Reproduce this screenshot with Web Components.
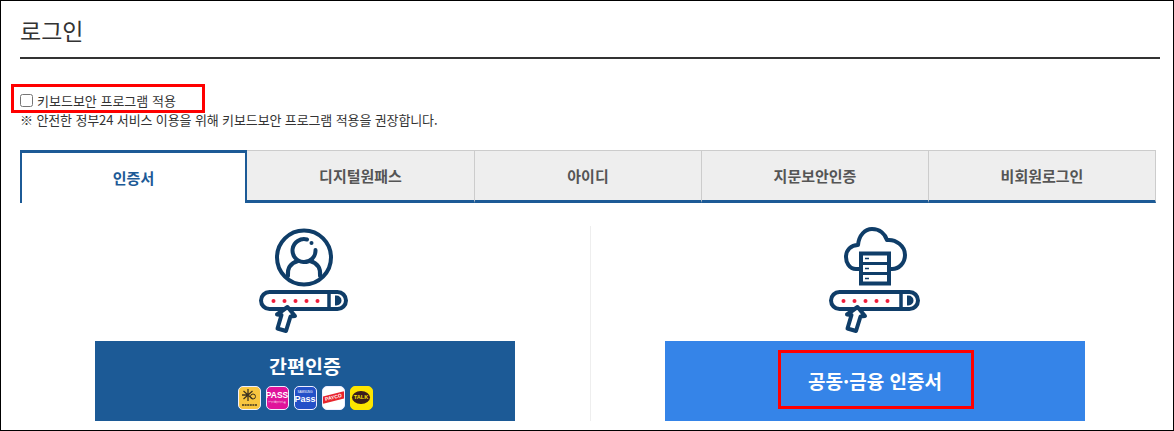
<!DOCTYPE html>
<html lang="ko">
<head>
<meta charset="utf-8">
<title>로그인</title>
<style>
  html, body { margin: 0; background: #fff; }
  body { font-family: "Noto Sans CJK KR", "Noto Sans", sans-serif; color: #333; }
</style>
</head>
<body>
<login-page>
  <key-option>키보드보안 프로그램 적용</key-option>
  <tab-bar slot="tabs">
    <tab-item active>인증서</tab-item>
    <tab-item>디지털원패스</tab-item>
    <tab-item>아이디</tab-item>
    <tab-item>지문보안인증</tab-item>
    <tab-item>비회원로그인</tab-item>
  </tab-bar>
  <auth-card slot="left" icon="user" color="#1c5a96" style="--label-size: 19.5px">
    간편인증
    <app-badges slot="extra"></app-badges>
  </auth-card>
  <auth-card slot="right" icon="cloud" color="#3584e8" marked>공동·금융 인증서</auth-card>
</login-page>

<script>
class LoginPage extends HTMLElement {
    constructor() {
        super();
        this.attachShadow({ mode: 'open' });
        this.shadowRoot.innerHTML = `
            <style>
                :host {
                    display: block;
                    box-sizing: border-box;
                    width: 1174px;
                    height: 431px;
                    border: 1px solid #000;
                    padding: 0 13px 0 19px;
                    overflow: hidden;
                }
                h1 {
                    margin: 0 0 25px;
                    height: 58px;
                    box-sizing: border-box;
                    border-bottom: 2px solid #333;
                    font-size: 23px;
                    font-weight: 400;
                    line-height: 58px;
                    color: #333;
                }
                .notice {
                    font-size: 13px;
                    letter-spacing: -0.12px;
                    line-height: 16px;
                    height: 16px;
                    color: #333;
                    margin-bottom: 22px;
                    white-space: nowrap;
                }
                .cols {
                    display: grid;
                    grid-template-columns: 570px 1px 568px;
                }
                .divider { background: #eeeeee; margin: 23px 0 0; height: 195px; }
            </style>
            <h1>로그인</h1>
            <slot></slot>
            <div class="notice">※ 안전한 정부24 서비스 이용을 위해 키보드보안 프로그램 적용을 권장합니다.</div>
            <slot name="tabs"></slot>
            <div class="cols">
                <slot name="left"></slot>
                <div class="divider"></div>
                <slot name="right"></slot>
            </div>
        `;
    }
}
customElements.define('login-page', LoginPage);

class KeyOption extends HTMLElement {
    constructor() {
        super();
        this.attachShadow({ mode: 'open' });
        this.shadowRoot.innerHTML = `
            <style>
                :host { display: block; position: relative; height: 28px; }
                label {
                    display: flex;
                    align-items: center;
                    gap: 4px;
                    height: 20px;
                    padding-top: 6px;
                    font-size: 13px;
                    color: #333;
                }
                input { margin: 0; width: 13px; height: 13px; }
                .mark {
                    position: absolute;
                    left: -9px; top: 0;
                    box-sizing: border-box;
                    width: 194px; height: 29px;
                    border: 3px solid #f00;
                    pointer-events: none;
                }
            </style>
            <label><input type="checkbox"><slot></slot></label>
            <div class="mark"></div>
        `;
    }
}
customElements.define('key-option', KeyOption);

class TabBar extends HTMLElement {
    constructor() {
        super();
        this.attachShadow({ mode: 'open' });
        this.shadowRoot.innerHTML = `
            <style>
                :host {
                    display: grid;
                    grid-template-columns: 227px 228px 227px 227px 227px;
                    height: 53px;
                }
            </style>
            <slot></slot>
        `;
    }
}
customElements.define('tab-bar', TabBar);

class TabItem extends HTMLElement {
    constructor() {
        super();
        this.attachShadow({ mode: 'open' });
        this.shadowRoot.innerHTML = `
            <style>
                :host {
                    display: flex;
                    align-items: center;
                    justify-content: center;
                    box-sizing: border-box;
                    height: 53px;
                    background: #eeeeee;
                    border-top: 1px solid #cccccc;
                    border-right: 1px solid #cccccc;
                    border-bottom: 3px solid #1c5a96;
                    font-size: 15px;
                    font-weight: 700;
                    color: #555;
                    padding-bottom: 1px;
                }
                :host([active]) {
                    background: #fff;
                    border: 2px solid #1c5a96;
                    border-top-width: 3px;
                    border-bottom: 0;
                    color: #1c5a96;
                }
            </style>
            <slot></slot>
        `;
    }
}
customElements.define('tab-item', TabItem);

// password bar + pointer shared by both icons, w is the bar width
const bar = (w) => {
    const dots = [43.5, 54.5, 65.5, 76.5, 87.5].map(x => `<circle cx="${x}" cy="81" r="2"/>`).join('');
    const end = 31 + w;
    return `
        <rect x="31" y="72" width="${w}" height="17" rx="8.5" fill="#fff" stroke="#0f3d68" stroke-width="4"/>
        <path d="M${end - 17} 71v19" stroke="#0f3d68" stroke-width="3.5"/>
        <path d="M${end - 11} 75.5h1.5a5 5 0 0 1 0 10H${end - 11}z" fill="#0f3d68"/>
        <g fill="#ee1c3a">${dots}</g>
        <path d="M57.5 87L65 96L60.5 96.5L56 111L47.5 108.5L51.5 95L47 94.5z" fill="#fff" stroke="#0f3d68" stroke-width="4" stroke-linejoin="round"/>
    `;
};

const ICONS = {
    user: `
        <circle cx="74" cy="37.5" r="27" fill="none" stroke="#0f3d68" stroke-width="4"/>
        <path d="M77 19.5A11.5 11.5 0 1 0 85.5 30" fill="none" stroke="#0f3d68" stroke-width="4" stroke-linecap="round"/>
        <circle cx="81.5" cy="23" r="2" fill="#0f3d68"/>
        <path d="M58 56c-1-8 3-13 10-15M90 56c1-8-3-13-10-15" fill="none" stroke="#0f3d68" stroke-width="4" stroke-linecap="round"/>
        ${bar(85)}
    `,
    cloud: `
        <path d="M60 49H56C49 49 46 42 46 37C46 30 51 25 58 25C59 15 65 9 72 9C80 9 85 14 87 20C96 19 105 26 105 35C105 43 99 49 92 49H90" fill="none" stroke="#0f3d68" stroke-width="4" stroke-linejoin="round"/>
        <rect x="61" y="33.5" width="28" height="30" fill="#fff" stroke="#0f3d68" stroke-width="4"/>
        <path d="M61 43.5h28M61 53.5h28" stroke="#0f3d68" stroke-width="3"/>
        <path d="M65 38.5h4M65 48.5h4M65 58.5h4" stroke="#0f3d68" stroke-width="1.5"/>
        ${bar(87)}
    `
};

class AuthIcon extends HTMLElement {
    connectedCallback() {
        if (this.shadowRoot) return;
        this.attachShadow({ mode: 'open' });
        const name = this.getAttribute('name') || 'user';
        this.shadowRoot.innerHTML = `
            <style>:host { display: block; width: 150px; height: 120px; } svg { display: block; }</style>
            <svg width="150" height="120" viewBox="0 0 150 120" aria-hidden="true">${ICONS[name]}</svg>
        `;
    }
}
customElements.define('auth-icon', AuthIcon);

class AuthCard extends HTMLElement {
    constructor() {
        super();
        this.attachShadow({ mode: 'open' });
        const icon = this.getAttribute('icon');
        const color = this.getAttribute('color');
        this.shadowRoot.innerHTML = `
            <style>
                :host {
                    display: flex;
                    flex-direction: column;
                    align-items: center;
                    padding-top: 17px;
                }
                .btn {
                    position: relative;
                    box-sizing: border-box;
                    width: 420px;
                    height: 80px;
                    margin-top: 1px;
                    background: ${color};
                    color: #fff;
                    font-weight: 700;
                    display: flex;
                    flex-direction: column;
                    align-items: center;
                    justify-content: center;
                    gap: 7px;
                }
                .mark {
                    position: absolute;
                    left: 113px; top: 9px;
                    box-sizing: border-box;
                    width: 196px; height: 59px;
                    border: 3px solid #f00;
                }
                .label { font-size: var(--label-size, 19px); line-height: 26px; }
            </style>
            <auth-icon name="${icon}"></auth-icon>
            <div class="btn">
                <span class="label"><slot></slot></span>
                <slot name="extra"></slot>
                ${this.hasAttribute('marked') ? '<div class="mark"></div>' : ''}
            </div>
        `;
    }
}
customElements.define('auth-card', AuthCard);

class AppBadges extends HTMLElement {
    constructor() {
        super();
        this.attachShadow({ mode: 'open' });
        this.shadowRoot.innerHTML = `
            <style>
                :host { display: flex; gap: 5px; font-family: "Liberation Sans", sans-serif; }
                .b {
                    box-sizing: border-box;
                    width: 23px; height: 24px;
                    border-radius: 5px;
                    border: 1px solid #eef;
                    display: flex;
                    flex-direction: column;
                    align-items: center;
                    justify-content: center;
                    font-weight: 700;
                    line-height: 1;
                    overflow: hidden;
                }
                .kb { background: #f8c640; }
                .kb svg { display: block; }
                .pass { background: #e0139a; color: #fff; font-size: 8.5px; }
                .sam { background: #2450c8; color: #fff; font-size: 9px; }
                .pay { background: #fff; }
                .pay span {
                    background: #e8242c; color: #fff; font-size: 5px;
                    padding: 1px 3px; transform: rotate(-14deg);
                }
                .talk { background: #fde500; border-color: #fde500; }
                .talk span {
                    background: #3a1d1d; color: #fde500; font-size: 5.5px;
                    padding: 4px 2px; border-radius: 50%;
                }
                small { display: block; font-size: 3px; font-weight: 400; margin-top: 1px; }
                .sam small { margin: 0 0 1px; }
            </style>
            <div class="b kb">
                <svg width="17" height="20" viewBox="0 0 17 20"><path d="M7 1v12M2.5 3l9 8M11.5 3l-9 8M1 7h6" stroke="#3f3420" stroke-width="1.3" fill="none"/><circle cx="12" cy="8.5" r="2.5" fill="none" stroke="#3f3420"/><path d="M1 17h15" stroke="#3f3420" stroke-width="1.5" stroke-dasharray="2 .6"/></svg>
            </div>
            <div class="b pass">PASS<small>본인확인 인증</small></div>
            <div class="b sam"><small>SAMSUNG</small>Pass</div>
            <div class="b pay"><span>PAYCO</span></div>
            <div class="b talk"><span>TALK</span></div>
        `;
    }
}
customElements.define('app-badges', AppBadges);
</script>
</body>
</html>
